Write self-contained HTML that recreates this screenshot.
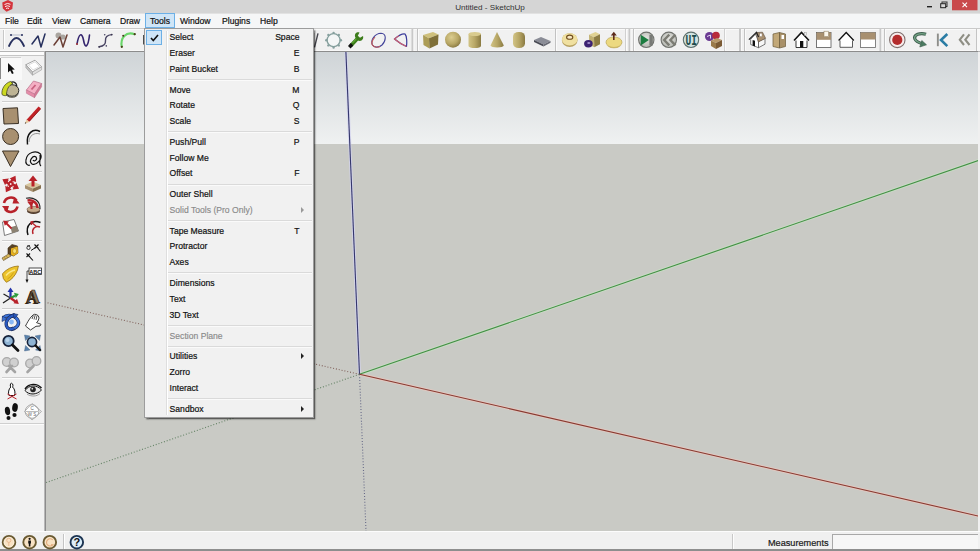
<!DOCTYPE html>
<html><head><meta charset="utf-8"><title>Untitled - SketchUp</title>
<style>
html,body{margin:0;padding:0;}
body{width:980px;height:551px;overflow:hidden;position:relative;background:#f0f0f0;font-family:"Liberation Sans",sans-serif;font-size:8.6px;color:#111;}
.abs{position:absolute;}
#title{left:0;top:0;width:980px;height:13px;background:#d5d5d5;}
#title .t{position:absolute;left:0;width:980px;top:2.5px;text-align:center;font-size:8.1px;line-height:10px;color:#333;}
#menubar{left:0;top:13px;width:980px;height:15px;background:#f5f6f7;border-top:1px solid #e2e2e2;box-sizing:border-box;}
#menubar span{-webkit-text-stroke:0.2px #111;position:absolute;top:2px;font-size:8.6px;line-height:10px;color:#111;white-space:nowrap;}
#menubar .hl{position:absolute;left:144.5px;top:-1px;width:30px;height:14.5px;background:#cfe5f7;border:1px solid #6cb0e6;box-sizing:border-box;}
#toolbar{left:0;top:28px;width:980px;height:24px;background:#f1f1f1;}
#left{left:0;top:52px;width:45px;height:479px;background:#f1f1f1;}
#view{left:45px;top:51px;width:932px;height:479px;border-left:1px solid #8c8c8c;border-top:1px solid #8c8c8c;}
#status{left:0;top:531px;width:980px;height:20px;background:#f0f0f0;}
#menu{left:144px;top:27.5px;width:170px;height:390.5px;background:#f1f1f1;border:1px solid #9c9c9c;box-sizing:border-box;box-shadow:1.5px 1.5px 1.5px rgba(0,0,0,.55);}
#menu .gut{position:absolute;left:21px;top:2px;bottom:2px;width:1px;background:#dedede;border-right:1px solid #fff;}
#menu .chk{position:absolute;left:1px;top:1px;width:16px;height:15px;background:#cfe5f7;border:1px solid #6cb0e6;box-sizing:border-box;}
#menu .it{-webkit-text-stroke:0.2px #111;position:absolute;left:24.6px;font-size:8.6px;line-height:10px;white-space:nowrap;color:#111;}
#menu .sc{-webkit-text-stroke:0.2px #111;position:absolute;right:13.5px;font-size:8.6px;line-height:10px;white-space:nowrap;color:#111;text-align:right;}
#menu .sep{position:absolute;left:23px;right:1px;height:1px;background:#dadada;border-bottom:1px solid #fafafa;}
#menu .dis{color:#8a8a8a;-webkit-text-stroke:0.15px #8a8a8a;}
#menu .arr{position:absolute;right:9px;width:0;height:0;border-left:3px solid #222;border-top:3px solid transparent;border-bottom:3px solid transparent;}
#menu .adis{border-left-color:#999;}
</style></head><body>
<div id="title" class="abs"><div class="t">Untitled - SketchUp</div>
<svg class="abs" style="left:0;top:0" width="980" height="13" viewBox="0 0 980 13">
<path d="M2.300 2.500 L8 0 L13 2.500 L12.300 9 L6.500 11.800 L2.800 8.500 Z" fill="#d4343c"/>
<path d="M4.500 4.500 Q7.500 2.500 10.500 4.300 M5 6.600 Q7.500 5 10 6.500 M6 8.500 Q7.500 7.600 9 8.500" stroke="#fff" stroke-width="0.900" fill="none"/>
<rect x="927" y="6" width="5" height="1.400" fill="#222"/>
<rect x="942" y="2" width="5" height="4.500" fill="none" stroke="#333" stroke-width="1"/>
<rect x="940.700" y="3.700" width="5" height="4" fill="#d8d8d8" stroke="#222" stroke-width="1"/>
<rect x="952" y="0" width="25.500" height="10.300" fill="#c9494b"/>
<path d="M962.500 2.700 L967 7.200 M967 2.700 L962.500 7.200" stroke="#fff" stroke-width="1.100"/>
</svg>
</div>
<div id="menubar" class="abs"><div class="hl"></div>
<span style="left:5px">File</span><span style="left:27px">Edit</span><span style="left:52px">View</span><span style="left:80px">Camera</span><span style="left:120px">Draw</span><span style="left:150px">Tools</span><span style="left:180px">Window</span><span style="left:222px">Plugins</span><span style="left:260px">Help</span>
</div>
<div id="toolbar" class="abs"><svg width="980" height="24" viewBox="0 28 980 24" style="display:block;position:absolute;left:0;top:0">
<defs>
<linearGradient id="tan" x1="0" y1="0" x2="1" y2="0"><stop offset="0" stop-color="#d2c486"/><stop offset="0.5" stop-color="#b8a766"/><stop offset="1" stop-color="#8a7a42"/></linearGradient>
<radialGradient id="tanr" cx="0.4" cy="0.35" r="0.7"><stop offset="0" stop-color="#dccd90"/><stop offset="0.6" stop-color="#b8a766"/><stop offset="1" stop-color="#85753e"/></radialGradient>
<radialGradient id="gbtn" cx="0.5" cy="0.4" r="0.6"><stop offset="0" stop-color="#e4e4e0"/><stop offset="1" stop-color="#b4b6b0"/></radialGradient>
</defs>
<rect x="0" y="28" width="980" height="1" fill="#cacaca"/><rect x="0" y="29" width="980" height="1" fill="#fafafa"/>
<rect x="0" y="50" width="980" height="1" fill="#f8f8f8"/>
<rect x="0" y="51" width="980" height="1" fill="#b4b4b4"/>
<!-- separators -->
<rect x="411.5" y="29" width="2" height="22" fill="#c8c8c8"/><rect x="413.5" y="29" width="1" height="22" fill="#fafafa"/><rect x="417" y="29" width="1" height="22" fill="#c2c2c2"/><rect x="418" y="29" width="1" height="22" fill="#fbfbfb"/><rect x="555" y="29" width="1" height="22" fill="#c2c2c2"/><rect x="556" y="29" width="1" height="22" fill="#fbfbfb"/><rect x="625" y="29" width="1" height="22" fill="#d0d0d0"/><rect x="626" y="29" width="1" height="22" fill="#fbfbfb"/><rect x="628.5" y="29" width="2" height="22" fill="#c8c8c8"/><rect x="630.5" y="29" width="1" height="22" fill="#fafafa"/><rect x="633" y="29" width="1" height="22" fill="#c2c2c2"/><rect x="634" y="29" width="1" height="22" fill="#fbfbfb"/><rect x="724" y="29" width="1" height="22" fill="#d0d0d0"/><rect x="725" y="29" width="1" height="22" fill="#fbfbfb"/><rect x="739" y="29" width="2" height="22" fill="#c8c8c8"/><rect x="741" y="29" width="1" height="22" fill="#fafafa"/><rect x="744" y="29" width="1" height="22" fill="#c2c2c2"/><rect x="745" y="29" width="1" height="22" fill="#fbfbfb"/><rect x="879.5" y="29" width="2" height="22" fill="#c8c8c8"/><rect x="881.5" y="29" width="1" height="22" fill="#fafafa"/><rect x="884" y="29" width="1" height="22" fill="#c2c2c2"/><rect x="885" y="29" width="1" height="22" fill="#fbfbfb"/>
<rect x="976" y="29" width="1" height="22" fill="#c4c4c4"/><rect x="977" y="29" width="3" height="22" fill="#f8f8f8"/>
<!-- gripper -->
<rect x="3" y="30" width="1" height="19" fill="#c8c8c8"/><rect x="4" y="30" width="1" height="19" fill="#fff"/>
<!-- 1 arc -->
<path d="M9 46 Q16.500 30 24 46" stroke="#27305e" stroke-width="1.8" fill="none" stroke-linecap="round"/>
<path d="M11 35 L22 35" stroke="#9aa0b8" stroke-width="0.7"/>
<circle cx="11" cy="35" r="1" fill="#27305e"/><circle cx="22" cy="35" r="1" fill="#27305e"/>
<!-- 2 polyline -->
<path d="M32 44 L38 36 L41 47 L45 34" stroke="#27305e" stroke-width="1.5" fill="none" stroke-linejoin="round" stroke-linecap="round"/>
<!-- 3 polyline w blob -->
<circle cx="58.500" cy="35.500" r="3" fill="#a9a59f"/><circle cx="63" cy="37" r="2.600" fill="#a9a59f"/>
<path d="M54 45 L60 37 L63 47 L67 35" stroke="#6b3f35" stroke-width="1.5" fill="none" stroke-linejoin="round" stroke-linecap="round"/>
<!-- 4 curvy N -->
<path d="M77 44 C79 32.500 82 32.500 83.500 40 C85 49 88 48 89.500 35" stroke="#34256e" stroke-width="1.6" fill="none" stroke-linecap="round"/>
<circle cx="77" cy="44" r="1" fill="#a83a3a"/>
<!-- 5 curvy I -->
<path d="M99.200 46.800 C104.500 46 105.800 43.500 105.500 40.500 C105.200 37.500 107 35 111.700 34.600" stroke="#4a4664" stroke-width="1.400" fill="none" stroke-linecap="round"/>
<circle cx="99.200" cy="46.800" r="0.900" fill="#3a3650"/><circle cx="111.700" cy="34.600" r="0.900" fill="#3a3650"/><circle cx="104.700" cy="34.800" r="0.800" fill="#4a4664"/><circle cx="106.300" cy="45.900" r="0.800" fill="#4a4664"/>
<!-- 6 green arc -->
<path d="M121.800 46.800 C120 38 126 31 134.700 34.200" stroke="#6ad66a" stroke-width="2.100" fill="none" stroke-linecap="round"/>
<circle cx="121.800" cy="46.800" r="1.100" fill="#4a3a1a"/><circle cx="134.700" cy="34.200" r="1.100" fill="#4a3a1a"/><circle cx="123.200" cy="35.800" r="1" fill="#4a3a1a"/>
<rect x="143" y="35" width="1.500" height="9.500" fill="#4e4e4e"/>
<!-- partial icons behind menu -->
<path d="M314.500 47.400 L318 33.300" stroke="#46464e" stroke-width="1.400"/>
<!-- octagon -->
<circle cx="333.6" cy="40.2" r="6.5" fill="#f4f6f6" stroke="#86a09e" stroke-width="1.300"/>
<g fill="#86a09e"><circle cx="340.9" cy="40.2" r="1.200"/><circle cx="338.8" cy="45.4" r="1.200"/><circle cx="333.6" cy="47.5" r="1.200"/><circle cx="328.4" cy="45.4" r="1.200"/><circle cx="326.3" cy="40.2" r="1.200"/><circle cx="328.4" cy="35.0" r="1.200"/><circle cx="333.6" cy="32.9" r="1.200"/><circle cx="338.8" cy="35.0" r="1.200"/></g>
<!-- wrench -->
<path d="M351 45.500 L357.500 38.500" stroke="#3d7d1c" stroke-width="3.600" stroke-linecap="butt"/><path d="M352.500 43 L357.500 37.600" stroke="#6cc03a" stroke-width="1" />
<path d="M355.200 37.200 C354 33.500 357 31.500 359.500 32.500 L357.800 35.800 L360 37.800 L363 36 C364 39 361.500 42 358 40.500 Z" fill="#3d7d1c"/>
<path d="M349.300 47.200 L352 44.300" stroke="#111" stroke-width="3.600"/>
<!-- rounded blob -->
<path d="M372.500 45 C370 40 375 33.500 381 33.200 C387 33.500 386 41 382 45 C379 47.800 374 47.800 372.500 45 Z" stroke="#44449a" stroke-width="1.100" fill="none"/>
<path d="M375 37 C371.500 41 371.500 44 372.500 45 C374 47.800 378 47.600 380 46.300" stroke="#c05a5a" stroke-width="1.100" fill="none"/>
<!-- rounded triangle -->
<path d="M394.500 39 C398 36 402 33.500 405 34 C407 36 407 43 406.500 46.500 C402 44.500 398 42 394.500 39 Z" stroke="#3a3a9a" stroke-width="1.200" fill="none" stroke-linejoin="round"/>
<path d="M406.500 46.500 C402 44.500 398 42 394.500 39 C396 37.700 397.500 36.600 399 35.800" stroke="#cc6070" stroke-width="1.200" fill="none"/>
<!-- sep -->

<!-- box -->
<path d="M423 35 L433 32 L438.500 34.500 L429 38.300 Z" fill="#cfc07c"/>
<path d="M423 35 L429 38.300 L429.500 48.400 L423.500 45 Z" fill="#ac9c56"/>
<path d="M429 38.300 L438.500 34.500 L438 44.500 L429.500 48.400 Z" fill="#7f6f38"/>
<!-- sphere -->
<circle cx="453" cy="39.700" r="8" fill="url(#tanr)"/>
<!-- cylinder -->
<path d="M468.500 34 L468.500 46 A6.200 2 0 0 0 481 46 L481 34 Z" fill="url(#tan)"/>
<ellipse cx="474.750" cy="34" rx="6.250" ry="2" fill="#d9cb8e"/>
<!-- cone -->
<path d="M497 32 L490.500 45.500 A6.700 2.200 0 0 0 503.800 45.500 Z" fill="url(#tan)"/>
<!-- capsule -->
<rect x="513" y="32" width="12" height="16" rx="5.500" ry="4.500" fill="url(#tan)"/>
<!-- slab -->
<path d="M534 40 L541 37 L550.500 41 L543.500 44.500 Z" fill="#8a8c96"/>
<path d="M534 40 L543.500 44.500 L543.500 46.500 L534 42 Z" fill="#4a4c56"/>
<path d="M543.500 44.500 L550.500 41 L550.500 42.800 L543.500 46.500 Z" fill="#666872"/>
<!-- sep -->

<!-- torus -->
<ellipse cx="569.700" cy="40.100" rx="7.900" ry="6.900" fill="#b8a262"/>
<ellipse cx="569.700" cy="39.400" rx="7.700" ry="6.200" fill="#f0e0a0"/>
<ellipse cx="569.700" cy="37.200" rx="3.100" ry="2.100" fill="#f8e8c4" stroke="#6e4c1c" stroke-width="1.100"/>
<!-- box w purple -->
<path d="M589 34.800 L595.500 32 L600 34.300 L594 37.300 Z" fill="#e0d292"/>
<path d="M589 34.800 L594 37.300 L594.300 47.300 L589.300 44.800 Z" fill="#c0b070"/>
<path d="M594 37.300 L600 34.300 L600 44.300 L594.300 47.300 Z" fill="#8c7c42"/>
<ellipse cx="588.400" cy="43.700" rx="4.300" ry="3.700" fill="#3c2272"/><ellipse cx="588.800" cy="43" rx="1.600" ry="1" fill="#a08cc8"/>
<!-- dome w arrow -->
<ellipse cx="614" cy="42.200" rx="8" ry="5.300" fill="#ecd980" stroke="#b09a48" stroke-width="0.600"/>
<path d="M606 43 A8 4.500 0 0 0 622 43 A8 5.300 0 0 1 606 43" fill="#c8b058"/>
<path d="M613.800 40 L613.800 35" stroke="#5c2a1a" stroke-width="1.600"/><path d="M610.800 35.600 L613.800 31.800 L616.800 35.600 Z" fill="#5c2a1a"/>
<!-- play -->
<circle cx="646.300" cy="39.800" r="7.700" fill="url(#gbtn)" stroke="#70726e" stroke-width="1.100"/>
<path d="M640.700 34.700 L648.900 40 L640.700 45.400 Z" fill="#1c7c40"/><rect x="649.400" y="34.700" width="3.400" height="10.700" fill="#787a76"/>
<!-- rewind -->
<circle cx="668.800" cy="39.800" r="7.700" fill="url(#gbtn)" stroke="#70726e" stroke-width="1.100"/>
<path d="M669.300 34.700 L664.200 40 L669.300 45.400 M675.500 34.700 L670.400 40 L675.500 45.400" stroke="#7c7c74" stroke-width="2.400" fill="none"/>
<!-- UI -->
<circle cx="691" cy="39.800" r="7.700" fill="#d2e4e2" stroke="#5e706e" stroke-width="1.100"/>
<text x="691.200" y="44.800" font-family="Liberation Mono, monospace" font-weight="bold" font-size="14.500" text-anchor="middle" fill="#1c4c4c" textLength="11.500" lengthAdjust="spacingAndGlyphs">UI</text>
<!-- colorful box -->
<circle cx="709.500" cy="36.500" r="4.500" fill="#6a3a92"/><circle cx="716" cy="35.500" r="3.800" fill="#b82a3a"/>
<path d="M707 36.500 L710.500 35 L710.500 38.500" stroke="#e8d8f0" stroke-width="1" fill="none"/>
<path d="M711 40.500 L717 38 L722 40 L716 43 Z" fill="#b89868"/>
<path d="M711 40.500 L716 43 L716 49 L711 46 Z" fill="#9a7a4a"/><path d="M716 43 L722 40 L722 46 L716 49 Z" fill="#7a5a34"/>
<!-- sep -->


<!-- house iso -->
<path d="M750.700 39.300 L755.500 34 L758.500 41.500 L758.500 47.700 L750.700 44.500 Z" fill="#fff" stroke="#444" stroke-width="0.700"/>
<path d="M758.500 41.500 L765 38.300 L765 44.200 L758.500 47.700 Z" fill="#f6f6f6" stroke="#444" stroke-width="0.700"/>
<path d="M756.300 32.600 L762.500 32.200 L765.600 38.300 L758.300 42 Z" fill="#a89070" stroke="#5a4a3a" stroke-width="0.600"/>
<path d="M748.900 39.600 L756.500 32.300 L758.600 37" stroke="#222" stroke-width="1.200" fill="none"/>
<rect x="752.600" y="40.200" width="2.400" height="5.600" fill="#111" transform="skewY(20) translate(0 -274.200)"/>
<rect x="759.800" y="33.300" width="2.200" height="3.200" fill="#fff" stroke="#8a7a6a" stroke-width="0.400"/>
<!-- door -->
<path d="M773 34 L779.500 32.500 L779.500 48 L773 46.500 Z" fill="#c2a878" stroke="#6a5a3a" stroke-width="0.700"/>
<path d="M779.500 32.500 L785.500 34 L785.500 46.500 L779.500 48 Z" fill="#a89068" stroke="#6a5a3a" stroke-width="0.700"/>
<rect x="781.500" y="35" width="2.500" height="4" fill="#fff"/>
<!-- house front -->
<path d="M796 40 L796 47.500 L807 47.500 L807 40" fill="#fff" stroke="#222" stroke-width="0.900"/>
<path d="M794 40.500 L801.500 32.500 L809 40.500" stroke="#111" stroke-width="1.600" fill="#fff" stroke-linejoin="miter"/>
<rect x="800" y="41" width="3.300" height="6.500" fill="#111"/>
<rect x="804.500" y="32.500" width="2" height="3" fill="#eee" stroke="#888" stroke-width="0.400"/>
<!-- top view -->
<rect x="816.500" y="32.500" width="14.500" height="15" fill="#fff" stroke="#555" stroke-width="0.800"/>
<rect x="816.500" y="32.500" width="14.500" height="7.300" fill="#a89070"/>
<rect x="824" y="31.200" width="4.600" height="5.500" fill="#fbf6ec" stroke="#8a7a5a" stroke-width="0.500"/>
<!-- house outline -->
<path d="M840 40 L840 47.300 L852.500 47.300 L852.500 40" fill="#fff" stroke="#333" stroke-width="0.800"/>
<path d="M838.600 40.500 L846.200 32.500 L853.800 40.500" stroke="#111" stroke-width="1.300" fill="#fff"/>
<!-- tan/white -->
<rect x="860.500" y="32.500" width="15" height="15" fill="#fff" stroke="#666" stroke-width="0.800"/>
<rect x="860.500" y="32.500" width="15" height="7" fill="#a89070"/>
<!-- sep -->

<!-- record -->
<circle cx="897.300" cy="39.900" r="7.700" fill="#f8ecec" stroke="#80706e" stroke-width="1.100"/>
<circle cx="897.300" cy="39.900" r="5.100" fill="#b42c2c"/>
<!-- green arrow -->
<path d="M926 34.300 C920 32.200 913.500 35 914.800 38.800 C915.800 41.500 919 42.800 922.500 43.800" stroke="#3e5e4e" stroke-width="3.200" fill="none"/>
<path d="M926 34.300 C920 32.200 913.500 35 914.800 38.800 C915.800 41.500 919 42.800 922.500 43.800" stroke="#74a486" stroke-width="1.300" fill="none"/>
<path d="M921.800 40.500 L926.500 44.800 L919.800 47 Z" fill="#4a7a60" stroke="#3e5e4e" stroke-width="0.600"/>
<!-- K -->
<rect x="936.900" y="33.600" width="1.900" height="12.600" fill="#8e8e8a"/>
<path d="M947.300 34 L941 40 L947.300 46.100" stroke="#2a7ca4" stroke-width="2.600" fill="none"/>
<!-- << -->
<path d="M964 34.300 L959.800 39.700 L964 45 M969.500 34.300 L965.300 39.700 L969.500 45" stroke="#8e8e84" stroke-width="2.100" fill="none"/>
</svg>
</div>
<div id="left" class="abs"><svg width="46" height="479" viewBox="0 52 46 479" style="display:block;position:absolute;left:0;top:0">
<rect x="0" y="52" width="44" height="3" fill="#fcfcfc"/><rect x="0" y="55" width="44" height="1" fill="#c6c6c6"/>
<rect x="44" y="52" width="1" height="479" fill="#b8b8b8"/>
<rect x="0" y="423" width="44" height="1" fill="#cfcfcf"/><rect x="0" y="424" width="44" height="1" fill="#fcfcfc"/>
<!-- gripper -->
<rect x="1" y="57" width="20" height="1" fill="#d2d2d2"/>
<!-- selected bg -->
<rect x="1" y="58" width="21" height="22" fill="#f9f9f9"/><rect x="0" y="58" width="1" height="21" fill="#8a8a8a"/>
<!-- cursor -->
<path d="M8 63 L8 72.500 L10.200 70.500 L12 74 L13.700 73.200 L12 69.800 L14.800 69.500 Z" fill="#111"/>
<!-- component -->
<path d="M25.900 64.700 L35 60.200 L41.600 66.800 L32.500 72 Z" fill="#fff" stroke="#9a9a9a" stroke-width="0.900"/>
<path d="M28.500 65 L35 61.800 L39.500 66.500 L33 70 Z" fill="#fff" stroke="#c4c4c4" stroke-width="0.600"/>
<path d="M25.900 64.700 L32.500 72 L32.500 75.200 L25.900 67.700 Z" fill="#c4c4c4" stroke="#9a9a9a" stroke-width="0.600"/>
<path d="M32.500 72 L41.600 66.800 L41.600 69.800 L32.500 75.200 Z" fill="#e0e0e0" stroke="#9a9a9a" stroke-width="0.600"/>
<!-- paint bucket -->
<ellipse cx="12" cy="90.500" rx="6.800" ry="5.800" fill="#bdb394" stroke="#2a2a2a" stroke-width="1"/>
<path d="M5.200 91 A6.800 5.800 0 0 0 18.800 91 L18.800 92.500 A6.800 5.200 0 0 1 5.200 92.500 Z" fill="#55503f"/>
<path d="M9.500 84 C12 80.500 16.500 81.500 16.800 86.500" stroke="#222" stroke-width="1.300" fill="none"/>
<path d="M2 94.500 C1.200 89 5 83 10.500 81.500 L13 83.500 C8.500 85.500 6.500 89.500 6.500 95.500 C5 96 3 95.500 2 94.500 Z" fill="#ccd820" stroke="#3a3a1a" stroke-width="0.700"/>
<!-- eraser -->
<path d="M26.400 90.100 L33.500 81 L41.600 83.500 L34.500 94.200 Z" fill="#f4afc4" stroke="#b8708a" stroke-width="0.700"/>
<path d="M26.400 90.100 L34.500 94.200 L34.500 97.700 L26.400 93.300 Z" fill="#e58ca8" stroke="#b8708a" stroke-width="0.500"/>
<path d="M34.500 94.200 L41.600 83.500 L41.600 86.800 L34.500 97.700 Z" fill="#d67894" stroke="#b8708a" stroke-width="0.500"/>
<path d="M31.500 89.500 L35.500 85" stroke="#c8607e" stroke-width="1.800"/>
<!-- sep -->
<rect x="2" y="101" width="40" height="1" fill="#cfcfcf"/><rect x="2" y="102" width="40" height="1" fill="#fcfcfc"/>
<!-- rectangle -->
<path d="M3 108.500 L17.500 107.800 L18.500 123.500 L4 124 Z" fill="#a89070" stroke="#3a3024" stroke-width="1"/>
<!-- pencil -->
<path d="M39.800 107.500 L27.800 120.800" stroke="#c02226" stroke-width="3.300"/>
<path d="M40.500 109 L29.500 121" stroke="#8a1418" stroke-width="0.800"/>
<path d="M26.600 119.300 L24.800 123.700 L29.300 122 Z" fill="#e8c8a0"/><path d="M25.500 122.200 L24.800 123.700 L26.400 123.100 Z" fill="#111"/>
<!-- circle -->
<circle cx="10.600" cy="136.500" r="8" fill="#a89070" stroke="#3a3024" stroke-width="1"/>
<!-- arc -->
<path d="M40 131.500 C33 128 26 133 27.500 144.500" stroke="#111" stroke-width="1.500" fill="none"/>
<path d="M40 134 C34 132 29 136 29 142" stroke="#555" stroke-width="0.600" fill="none"/>
<!-- polygon triangle -->
<path d="M2.500 151 L19 151 L10.500 166.500 Z" fill="#a89070" stroke="#3a3024" stroke-width="1"/>
<!-- freehand -->
<path d="M26 160 C27 152 36 150 40.500 154 C43 159 36 166 32 164 C28 161 33 155 36 157 C38 160 34 162 33 160 M40 155 C41 160 38 164 41 166 M26 160 C25 164 28 166 30 165" stroke="#111" stroke-width="1.200" fill="none"/>
<!-- sep -->
<rect x="2" y="171" width="40" height="1" fill="#cfcfcf"/><rect x="2" y="172" width="40" height="1" fill="#fcfcfc"/>
<!-- move -->
<g fill="#b8222a"><g transform="translate(10.700 184) rotate(30)"><path d="M-1.900 0 L-1.900 -4.300 L-3.800 -4.300 L0 -9.600 L3.800 -4.300 L1.900 -4.300 L1.900 0 Z"/></g><g transform="translate(10.700 184) rotate(120)"><path d="M-1.900 0 L-1.900 -4.300 L-3.800 -4.300 L0 -9.600 L3.800 -4.300 L1.900 -4.300 L1.900 0 Z"/></g><g transform="translate(10.700 184) rotate(210)"><path d="M-1.900 0 L-1.900 -4.300 L-3.800 -4.300 L0 -9.600 L3.800 -4.300 L1.900 -4.300 L1.900 0 Z"/></g><g transform="translate(10.700 184) rotate(300)"><path d="M-1.900 0 L-1.900 -4.300 L-3.800 -4.300 L0 -9.600 L3.800 -4.300 L1.900 -4.300 L1.900 0 Z"/></g></g>
<circle cx="10.700" cy="184" r="2.600" fill="#b8222a"/><g fill="#f8e4e4"><circle cx="10.700" cy="184" r="0.900"/><circle cx="8.500" cy="181.500" r="0.700"/><circle cx="13.200" cy="181.800" r="0.700"/><circle cx="13" cy="186.500" r="0.700"/><circle cx="8.300" cy="186.200" r="0.700"/></g>
<!-- push pull -->
<path d="M25 185 L33 181.500 L41 185 L33 188.500 Z" fill="#d9c79e"/>
<path d="M25 185 L33 188.500 L33 192 L25 188.500 Z" fill="#a89070"/><path d="M33 188.500 L41 185 L41 188.500 L33 192 Z" fill="#85704e"/>
<path d="M33 186.500 L33 180" stroke="#b8222a" stroke-width="3"/><path d="M28.500 181 L33 175.500 L37.500 181 Z" fill="#b8222a"/>
<!-- rotate -->
<path d="M4 203 A7 7 0 0 1 16.500 200.500" stroke="#b8222a" stroke-width="2.600" fill="none"/>
<path d="M14.500 197 L19.500 203.500 L12.500 203.500 Z" fill="#b8222a"/>
<path d="M17.500 206.500 A7 7 0 0 1 5 209" stroke="#b8222a" stroke-width="2.600" fill="none"/>
<path d="M7 212.500 L2 206 L9 206 Z" fill="#b8222a"/>
<!-- follow me -->
<ellipse cx="33.500" cy="211" rx="6.500" ry="3" fill="#4e3828"/>
<ellipse cx="33.500" cy="209.300" rx="6.500" ry="3" fill="#c4a888" stroke="#5a4434" stroke-width="0.500"/>
<path d="M26 198.300 C33 196.500 40.500 200.500 40 209" stroke="#222" stroke-width="1.100" fill="none"/>
<path d="M27.500 200.500 C33 199.500 37.500 203 37.500 208" stroke="#b8222a" stroke-width="2.400" fill="none"/>
<path d="M31.500 203 L31.500 209" stroke="#b8222a" stroke-width="2"/>
<path d="M27.500 202 L34.500 201.500 L31 206.500 Z" fill="#b8222a"/>
<!-- scale -->
<path d="M2.500 222 L14 219.500 L18.500 231 L4.500 235.500 Z" fill="#fff" stroke="#6e6e6e" stroke-width="0.900"/>
<path d="M10.500 227.300 L16.500 225.500 L18.500 231 L12 233.200 Z" fill="#8c8272"/>
<path d="M11.500 228.500 L6 223" stroke="#b8222a" stroke-width="1.800"/><path d="M3.300 220.500 L9 221.500 L4.800 225.800 Z" fill="#b8222a"/>
<!-- offset -->
<path d="M40.500 222.500 C32 219 25 225 28 235" stroke="#111" stroke-width="1.500" fill="none"/>
<path d="M40 227 C35 225.500 31.500 229 33 234" stroke="#b8222a" stroke-width="1.500" fill="none"/>
<path d="M31 222 L36.500 226.500 M33.500 221.500 L31 222 L31.500 225" stroke="#b8222a" stroke-width="1.300" fill="none"/>
<!-- sep -->
<rect x="2" y="240" width="40" height="1" fill="#cfcfcf"/><rect x="2" y="241" width="40" height="1" fill="#fcfcfc"/>
<!-- tape -->
<path d="M8 248 L12 244.500 L17.500 246 L18 253 L13.500 256 L8 254 Z" fill="#5a4426" stroke="#3a2a14" stroke-width="0.600"/>
<path d="M11 248.500 L17.500 246.500 L18 253 L13.500 256 L11 254.500 Z" fill="#e9b31c"/>
<ellipse cx="14.600" cy="251" rx="2" ry="2.400" fill="#f8e070" stroke="#9a6a14" stroke-width="0.500"/>
<path d="M8.500 254 L2 258 L3.500 260.500 L11 256 Z" fill="#d9b858" stroke="#5a4424" stroke-width="0.600"/>
<path d="M4.500 257.500 L5.500 259 M6.500 256.300 L7.500 257.800" stroke="#5a4424" stroke-width="0.500"/>
<!-- dimension -->
<path d="M34.500 244.500 L38.500 248.500 M38.500 244.500 L34.500 248.500 M36.500 246.500 L40.500 251.500" stroke="#111" stroke-width="1.100" fill="none"/>
<path d="M26.500 253.500 L30 257 M30 253.500 L26.500 257 M28.300 255.300 L33 260.500" stroke="#111" stroke-width="1.100" fill="none"/>
<path d="M31 250.500 L35.500 247.500" stroke="#111" stroke-width="1" fill="none"/>
<circle cx="28.500" cy="247.800" r="1.700" fill="none" stroke="#111" stroke-width="0.800"/><path d="M27 246 L30 245.500" stroke="#111" stroke-width="0.800"/>
<!-- protractor -->
<path d="M2.500 273.700 Q9 266.500 18.400 266 L17.500 270 Q14 279 6.400 282.300 Q2.300 279 2.500 273.700 Z" fill="#ecc32a" stroke="#9a7414" stroke-width="0.800"/>
<path d="M6 275.500 Q10 271 15 270" stroke="#fbe98a" stroke-width="1.300" fill="none"/>
<path d="M7.500 279 Q11.500 276.500 13.500 272.500" stroke="#c89a14" stroke-width="0.800" fill="none"/>
<!-- text ABC -->
<rect x="29" y="268" width="12.500" height="6.500" fill="#fff" stroke="#222" stroke-width="0.800"/>
<text x="35.300" y="273.600" font-size="5.500" font-weight="bold" font-family="Liberation Sans, sans-serif" text-anchor="middle" fill="#111">ABC</text>
<path d="M29 271 L27 271 L27 281" stroke="#222" stroke-width="0.800" fill="none"/><path d="M25.500 279.500 L27 283 L28.500 279.500 Z" fill="#111"/>
<!-- axes -->
<path d="M10.500 298 L3.500 294 M10.500 298 L3 303" stroke="#222" stroke-width="1.300"/>
<path d="M10.500 298 L10.500 291" stroke="#2233aa" stroke-width="2.200"/><path d="M7.500 292 L10.500 287.500 L13.500 292 Z" fill="#2233aa"/>
<path d="M10.500 298 L15 295.800" stroke="#2a9a3a" stroke-width="2.200"/><path d="M14 292.800 L18.800 294 L15.800 298 Z" fill="#2a9a3a"/>
<path d="M10.500 298 L15.500 301.500" stroke="#b8222a" stroke-width="2.200"/><path d="M17 298.700 L18.800 304 L13.500 303.200 Z" fill="#b8222a"/>
<!-- 3d text -->
<text x="31.500" y="304" font-size="19" font-weight="bold" font-family="Liberation Serif, serif" text-anchor="middle" fill="#2e2216">A</text>
<text x="33.200" y="303.300" font-size="18.500" font-weight="bold" font-family="Liberation Serif, serif" text-anchor="middle" fill="#8e785a" stroke="#2e2216" stroke-width="0.700">A</text>
<!-- sep -->
<rect x="2" y="308" width="40" height="1" fill="#cfcfcf"/><rect x="2" y="309" width="40" height="1" fill="#fcfcfc"/>
<!-- orbit -->
<path d="M3 318 C8 313 17 316 18.500 322 C19 326 15 329 11 329.500" stroke="#1a2a5a" stroke-width="3.400" fill="none"/>
<path d="M3 318 C8 313 17 316 18.500 322 C19 326 15 329 11 329.500" stroke="#3a72d8" stroke-width="2.200" fill="none"/>
<path d="M15 315 C9 316 5 321 6.500 326 C7.500 329 11 330 14 328" stroke="#1a2a5a" stroke-width="3.400" fill="none"/>
<path d="M15 315 C9 316 5 321 6.500 326 C7.500 329 11 330 14 328" stroke="#2a5ac0" stroke-width="2.200" fill="none"/>
<path d="M2 321.500 L2.500 316 L7 319 Z" fill="#3a72d8" stroke="#1a2a5a" stroke-width="0.600"/>
<path d="M13 313.500 L18 314.500 L14.500 318.500 Z" fill="#2a5ac0" stroke="#1a2a5a" stroke-width="0.600"/>
<circle cx="11.500" cy="322" r="2.400" fill="#8ab8f4"/>
<!-- pan -->
<path d="M25.500 326 C27 323 29 319.500 31 317 L33 315 L34.500 314.300 L36.500 314.600 L38.300 315.800 L39 318 L38 321 L36.500 322.600 L41 324.300 L40 326 L36 326.300 L30.500 330 Z" fill="#fff" stroke="#2a2a2a" stroke-width="0.900" stroke-linejoin="round"/>
<path d="M33.300 315.500 L32 319 M35.200 315 L34 319.500 M37 315.500 L36 320" stroke="#2a2a2a" stroke-width="0.800"/>
<!-- zoom -->
<circle cx="8.500" cy="341" r="5.200" fill="#8fb4d4" stroke="#16223a" stroke-width="1.800"/>
<circle cx="7.500" cy="340" r="2" fill="#b8d4ec"/>
<path d="M12.500 345 L18 350.500" stroke="#111" stroke-width="2.800" stroke-linecap="round"/>
<!-- zoom ext -->
<g fill="#5a82ac" stroke="#3a5a80" stroke-width="0.400"><path d="M24.500 335 L30 336 L25.500 340.500 Z"/><path d="M40.500 335 L39.500 340.500 L35 336 Z"/><path d="M24.500 351 L25.500 345.500 L30 350 Z"/><path d="M41 351 L35.500 350 L40 345.500 Z"/></g>
<circle cx="32" cy="342" r="4.600" fill="#8fb4d4" stroke="#16223a" stroke-width="1.600"/>
<path d="M35.500 345.500 L40 350" stroke="#111" stroke-width="2.400" stroke-linecap="round"/>
<!-- prev / next (gray) -->
<g>
<circle cx="6.800" cy="362" r="4.300" fill="#d0d0d0" stroke="#a8a8a8" stroke-width="1.300"/><circle cx="14" cy="362.500" r="4.300" fill="#d0d0d0" stroke="#a8a8a8" stroke-width="1.300"/>
<path d="M9 366 L15 372 M12 366 L6.500 372" stroke="#a4a4a4" stroke-width="2.600" stroke-linecap="round"/>
<circle cx="30" cy="363.500" r="4.300" fill="#d0d0d0" stroke="#a8a8a8" stroke-width="1.300"/><circle cx="36.500" cy="361" r="4.300" fill="#d0d0d0" stroke="#a8a8a8" stroke-width="1.300"/>
<path d="M33.500 366 L27.500 372" stroke="#a4a4a4" stroke-width="2.600" stroke-linecap="round"/>
</g>
<!-- sep -->
<rect x="2" y="377" width="40" height="1" fill="#cfcfcf"/><rect x="2" y="378" width="40" height="1" fill="#fcfcfc"/>
<!-- position camera -->
<path d="M11.500 383 C13.500 384 13 386.500 12.500 387 C15 389 15.500 393 14.500 395.500 L9 395.500 C8 393 8.500 389 10.800 387 C10 386 10 384 11.500 383 Z" fill="#fff" stroke="#111" stroke-width="1"/>
<path d="M7.500 394 L16.500 399 M16.500 394 L7.500 399" stroke="#b8222a" stroke-width="1"/>
<!-- eye -->
<path d="M25 390.500 C29 384.500 37 384.500 41.500 390 C37 395 29 395.500 25 390.500 Z" fill="#e8e8e8" stroke="#111" stroke-width="1"/>
<path d="M25 389 C29 383 37 383 41.500 388" stroke="#111" stroke-width="1.400" fill="none"/>
<circle cx="33" cy="389.500" r="2.800" fill="#222"/><circle cx="32.300" cy="388.700" r="0.900" fill="#ddd"/>
<path d="M27 394 C31 397 37 396.500 40 393.500" stroke="#777" stroke-width="0.700" fill="none"/>
<!-- walk -->
<ellipse cx="7.500" cy="411" rx="2.600" ry="4.200" fill="#111" transform="rotate(-8 7.500 411)"/><ellipse cx="8.500" cy="418" rx="2" ry="2" fill="#111"/>
<ellipse cx="15" cy="407.500" rx="2.800" ry="4.400" fill="#111" transform="rotate(8 15 407.500)"/><ellipse cx="14.500" cy="415" rx="2.100" ry="2.100" fill="#111"/>
<!-- section -->
<circle cx="32" cy="411.500" r="6.800" fill="#fff" stroke="#a0a0a0" stroke-width="0.900"/>
<path d="M24.500 411.500 L32 403.500 L41.500 411.500 L32 420 Z" fill="none" stroke="#a8a8a8" stroke-width="0.900"/>
<path d="M26 411.500 L38 411.500" stroke="#a0a0a0" stroke-width="0.700"/>
<text x="32" y="410.300" font-size="4.500" font-family="Liberation Sans, sans-serif" text-anchor="middle" fill="#666">C</text>
<text x="32" y="416.300" font-size="4.500" font-family="Liberation Sans, sans-serif" text-anchor="middle" fill="#666">W S</text>
</svg>
</div>
<div id="view" class="abs">
<svg width="932" height="479" viewBox="46 52 932 479" style="display:block">
<defs><linearGradient id="sky" x1="0" y1="0" x2="0" y2="1"><stop offset="0" stop-color="#cfd4d7"/><stop offset="1" stop-color="#eff1f1"/></linearGradient></defs>
<rect x="46" y="52" width="933" height="92" fill="url(#sky)"/>
<rect x="46" y="144" width="933" height="387" fill="#c9cac5"/>
<line x1="345.900" y1="52" x2="359.500" y2="374.300" stroke="#d4d4f0" stroke-width="3" opacity="0.800"/>
<line x1="359.500" y1="374.300" x2="979" y2="160.300" stroke="#c8e4c4" stroke-width="3" opacity="0.700"/>
<line x1="359.500" y1="374.300" x2="979" y2="516.200" stroke="#ecc8c0" stroke-width="3" opacity="0.700"/>
<line x1="345.900" y1="52" x2="359.500" y2="374.300" stroke="#34366c" stroke-width="1.100"/>
<line x1="359.500" y1="374.300" x2="979" y2="160.300" stroke="#448f46" stroke-width="1.100"/>
<line x1="359.500" y1="374.300" x2="979" y2="516.200" stroke="#883a30" stroke-width="1.100"/>
<line x1="359.500" y1="374.300" x2="46" y2="302.500" stroke="#7c5a54" stroke-width="1.100" stroke-dasharray="1 1.900" opacity="0.900"/>
<line x1="359.500" y1="374.300" x2="46" y2="482.600" stroke="#5a7c5c" stroke-width="1.100" stroke-dasharray="1 1.900" opacity="0.900"/>
<line x1="359.500" y1="374.300" x2="366" y2="531" stroke="#50547a" stroke-width="1.100" stroke-dasharray="1 1.900" opacity="0.800"/>
</svg>
</div>
<div id="status" class="abs"><svg width="980" height="20" viewBox="0 531 980 20" style="display:block;position:absolute;left:0;top:0">
<rect x="0" y="531" width="980" height="1" fill="#fcfcfc"/>
<rect x="0" y="549" width="980" height="2" fill="#8e8e8e"/>
<!-- circle 1 -->
<circle cx="9" cy="542.200" r="6.300" fill="#f8e2c4" stroke="#6a5a32" stroke-width="1.900"/>
<circle cx="9" cy="542.200" r="4.900" fill="none" stroke="#fdf2e0" stroke-width="0.800"/>
<circle cx="8.800" cy="540.300" r="2.100" fill="none" stroke="#e6b48c" stroke-width="0.900"/><path d="M8.800 542.400 L8.800 546" stroke="#e6b48c" stroke-width="0.900"/>
<!-- circle 2 -->
<circle cx="29.600" cy="542.200" r="6.300" fill="#f8e2c4" stroke="#6a5a32" stroke-width="1.900"/>
<circle cx="29.600" cy="538.800" r="1.100" fill="#111"/><path d="M28.300 540.400 L30.900 540.400 L31 543.500 L30.400 543.500 L30.400 546.500 L28.800 546.500 L28.800 543.500 L28.200 543.500 Z" fill="#111"/>
<!-- circle 3 -->
<circle cx="49.800" cy="542.200" r="6.300" fill="#f8e2c4" stroke="#6a5a32" stroke-width="1.900"/>
<path d="M52.800 540 A3.600 3.600 0 1 0 52.800 544.800 L51 544.800" stroke="#e2ac7c" stroke-width="1.100" fill="none"/>
<rect x="63" y="534" width="1" height="15" fill="#c4c4c4"/><rect x="64" y="534" width="1" height="15" fill="#fff"/>
<!-- help -->
<circle cx="76.800" cy="542.200" r="6.300" fill="#dceefa" stroke="#1c3452" stroke-width="1.900"/>
<text x="76.800" y="546.200" font-size="11" font-weight="bold" font-family="Liberation Sans, sans-serif" text-anchor="middle" fill="#111">?</text>
<rect x="732" y="534" width="1" height="15" fill="#c8c8c8"/><rect x="733" y="534" width="1" height="15" fill="#fdfdfd"/>
<text stroke="#1a1a1a" stroke-width="0.200" x="768" y="546" font-size="9.200" font-family="Liberation Sans, sans-serif" fill="#1a1a1a" textLength="60.500" lengthAdjust="spacingAndGlyphs">Measurements</text>
<rect x="832" y="534" width="146" height="15" fill="#f6f6f6"/>
<rect x="832" y="534" width="146" height="1" fill="#a8a8a8"/><rect x="832" y="534" width="1" height="15" fill="#a8a8a8"/>
</svg>
</div>
<div id="menu" class="abs">
<div class="gut"></div>
<div class="chk"></div>
<svg class="abs" style="left:5px;top:5px" width="9" height="8" viewBox="0 0 9 8"><path d="M1 4 L3.300 6.500 L8 1" stroke="#111" stroke-width="1.6" fill="none"/></svg>
<div class="it" style="top:3.5px">Select</div>
<div class="sc" style="top:3.5px">Space</div>
<div class="it" style="top:19.5px">Eraser</div>
<div class="sc" style="top:19.5px">E</div>
<div class="it" style="top:35.5px">Paint Bucket</div>
<div class="sc" style="top:35.5px">B</div>
<div class="it" style="top:56.5px">Move</div>
<div class="sc" style="top:56.5px">M</div>
<div class="it" style="top:71.5px">Rotate</div>
<div class="sc" style="top:71.5px">Q</div>
<div class="it" style="top:87.5px">Scale</div>
<div class="sc" style="top:87.5px">S</div>
<div class="it" style="top:108.5px">Push/Pull</div>
<div class="sc" style="top:108.5px">P</div>
<div class="it" style="top:124.5px">Follow Me</div>
<div class="it" style="top:139.5px">Offset</div>
<div class="sc" style="top:139.5px">F</div>
<div class="it" style="top:160.5px">Outer Shell</div>
<div class="it dis" style="top:176.5px">Solid Tools (Pro Only)</div>
<div class="arr adis" style="top:178.5px"></div>
<div class="it" style="top:197.5px">Tape Measure</div>
<div class="sc" style="top:197.5px">T</div>
<div class="it" style="top:212.5px">Protractor</div>
<div class="it" style="top:228.5px">Axes</div>
<div class="it" style="top:249.5px">Dimensions</div>
<div class="it" style="top:265.5px">Text</div>
<div class="it" style="top:281.5px">3D Text</div>
<div class="it dis" style="top:302.5px">Section Plane</div>
<div class="it" style="top:322.5px">Utilities</div>
<div class="arr" style="top:324.5px"></div>
<div class="it" style="top:338.5px">Zorro</div>
<div class="it" style="top:354.5px">Interact</div>
<div class="it" style="top:375.5px">Sandbox</div>
<div class="arr" style="top:377.5px"></div>
<div class="sep" style="top:50.5px"></div>
<div class="sep" style="top:102.5px"></div>
<div class="sep" style="top:155.5px"></div>
<div class="sep" style="top:191.5px"></div>
<div class="sep" style="top:243.5px"></div>
<div class="sep" style="top:296.5px"></div>
<div class="sep" style="top:317.5px"></div>
<div class="sep" style="top:369.5px"></div>
</div>
</body></html>
